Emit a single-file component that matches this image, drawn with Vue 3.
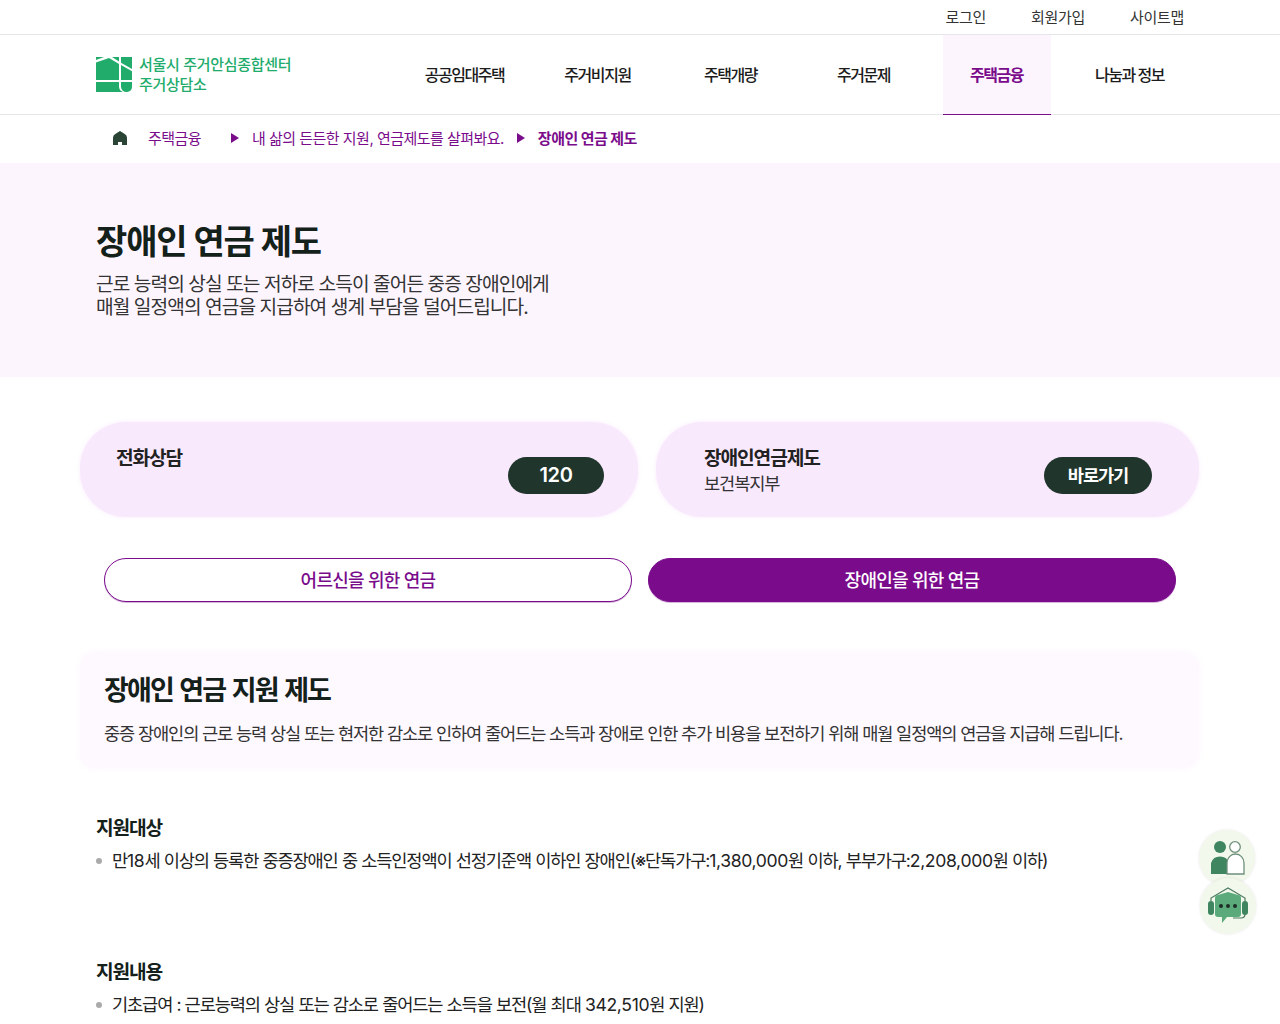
<script setup>
const topLinks = ['로그인', '회원가입', '사이트맵']
const navItems = [
  { label: '공공임대주택' },
  { label: '주거비지원' },
  { label: '주택개량' },
  { label: '주거문제' },
  { label: '주택금융', active: true },
  { label: '나눔과 정보' },
]
const sections = [
  { title: '지원대상', text: '만18세 이상의 등록한 중증장애인 중 소득인정액이 선정기준액 이하인 장애인(※단독가구:1,380,000원 이하, 부부가구:2,208,000원 이하)' },
  { title: '지원내용', text: '기초급여 : 근로능력의 상실 또는 감소로 줄어드는 소득을 보전(월 최대 342,510원 지원)' },
]
// numbers are set looser than the hangul around them
const splitNums = (text) => text.split(/([\d,]{2,})/)
</script>

<template>
  <div class="page">
    <div class="topbar">
      <a v-for="link in topLinks" :key="link" class="top_link">{{ link }}</a>
    </div>

    <header class="header">
      <div class="logo">
        <svg class="logo_mark" width="36" height="36" viewBox="0 0 36 36">
          <path d="M0 0 L8 0 L0 3 Z" fill="#22ac6c" />
          <path d="M0 5.5 L13 1 L23 7 L23 23 L0 23 Z" fill="#22ac6c" />
          <path d="M16 0 L23 0 L23 4.5 Z" fill="#22ac6c" />
          <path d="M25 0 L36 0 L36 12 L25 5.7 Z" fill="#22ac6c" />
          <path d="M25 8 L36 14.3 L36 23 L25 23 Z" fill="#22ac6c" />
          <path d="M0 25 L23 25 L23 30 A6 6 0 0 0 27 35 L0 35 Z" fill="#22ac6c" />
          <path d="M25 25 L36 25 L36 30 A5 5 0 0 1 31 35 L30.5 35 A5.5 5.5 0 0 1 25 29.5 Z" fill="#22ac6c" />
        </svg>
        <div class="logo_text">
          <span>서울시 주거안심종합센터</span>
          <span>주거상담소</span>
        </div>
      </div>
      <nav class="nav">
        <a
          v-for="item in navItems"
          :key="item.label"
          :class="{ nav_item: true, active: item.active }"
        >{{ item.label }}</a>
      </nav>
    </header>

    <div class="breadcrumb">
      <svg class="crumb_home" width="14" height="14" viewBox="0 0 14 14">
        <path d="M0 14 V6.5 Q0 4 3 2.5 L7 0 L11 2.5 Q14 4 14 6.5 V14 H9 V11 H5 V14 Z" fill="#2a4536" />
      </svg>
      <span class="crumb first">주택금융</span>
      <span class="arrow"></span>
      <span class="crumb">내 삶의 든든한 지원, 연금제도를 살펴봐요.</span>
      <span class="arrow"></span>
      <span class="crumb current">장애인 연금 제도</span>
    </div>

    <section class="hero">
      <h1>장애인 연금 제도</h1>
      <p>근로 능력의 상실 또는 저하로 소득이 줄어든 중증 장애인에게<br>매월 일정액의 연금을 지급하여 생계 부담을 덜어드립니다.</p>
    </section>

    <div class="cards">
      <div class="card card_left">
        <div class="card_text"><strong>전화상담</strong></div>
        <a class="pill pill_num">120</a>
      </div>
      <div class="card card_right">
        <div class="card_text">
          <strong>장애인연금제도</strong>
          <span>보건복지부</span>
        </div>
        <a class="pill pill_go">바로가기</a>
      </div>
    </div>

    <div class="tabs">
      <button class="tab">어르신을 위한 연금</button>
      <button class="tab on">장애인을 위한 연금</button>
    </div>

    <div class="info">
      <h2>장애인 연금 지원 제도</h2>
      <p>중증 장애인의 근로 능력 상실 또는 현저한 감소로 인하여 줄어드는 소득과 장애로 인한 추가 비용을 보전하기 위해 매월 일정액의 연금을 지급해 드립니다.</p>
    </div>

    <section v-for="s in sections" :key="s.title" class="detail">
      <h3>{{ s.title }}</h3>
      <div class="bullet">
        <i></i>
        <span>
          <template v-for="(part, idx) in splitNums(s.text)" :key="idx">
            <span v-if="idx % 2" class="num">{{ part }}</span>
            <template v-else>{{ part }}</template>
          </template>
        </span>
      </div>
    </section>

    <div class="floats">
      <a class="float_btn">
        <svg width="36" height="36" viewBox="0 0 36 36">
          <circle cx="11" cy="7" r="6" fill="#3f8560" />
          <path d="M2 34 L2 23 A9.5 9.5 0 0 1 20 23 L20 34 Z" fill="#3f8560" />
          <circle cx="26" cy="7" r="5.3" fill="#fff" stroke="#6f8f7c" stroke-width="1.3" />
          <path d="M18 34 L18 23 A8.5 9 0 0 1 35 23 L35 34 Z" fill="#fff" stroke="#6f8f7c" stroke-width="1.3" />
        </svg>
      </a>
      <a class="float_btn second">
        <svg width="44" height="40" viewBox="0 0 44 40">
          <path d="M5 15 L5 12 L22 2 L39 12 L39 28 Q39 32 35 32 L27 32" fill="none" stroke="#4d7a62" stroke-width="1.2" />
          <rect x="2" y="15" width="6" height="14" rx="3" fill="#3f8560" />
          <rect x="36" y="15" width="6" height="14" rx="3" fill="#3f8560" />
          <path d="M9 12 Q9 9 12 9 L22 6 L32 9 Q35 9 35 12 L35 28 Q35 31 32 31 L21 31 L16 37 L16 31 L12 31 Q9 31 9 28 Z" fill="#5aaa7c" />
          <circle cx="15" cy="20" r="2" fill="#1f2d26" />
          <circle cx="22" cy="20" r="2" fill="#1f2d26" />
          <circle cx="29" cy="20" r="2" fill="#1f2d26" />
        </svg>
      </a>
    </div>
  </div>
</template>

<style>
html, body {
  margin: 0;
  height: 1024px;
  overflow: hidden;
  background: #fff;
}
</style>

<style scoped>
.page {
  font-family: Inter, "Noto Sans CJK KR", sans-serif;
  color: #1c1c1c;
  letter-spacing: -0.07em;
  height: 1024px;
  overflow: hidden;
  position: relative;
}

.topbar {
  height: 34px;
  border-bottom: 1px solid #e6e6e8;
  display: flex;
  justify-content: flex-end;
  align-items: center;
  gap: 45px;
  padding-right: 96px;
}
.top_link {
  font-size: 15px;
  line-height: 34px;
  margin-top: 2px;
  color: #333;
  letter-spacing: -0.02em;
}

.header {
  height: 79px;
  border-bottom: 1px solid #e6e6e8;
  display: flex;
  align-items: center;
  padding-left: 96px;
}
.logo {
  display: flex;
  align-items: center;
  gap: 7px;
  width: 302px;
}
.logo_mark {
  display: block;
}
.logo_text {
  display: flex;
  flex-direction: column;
  color: #22ac6c;
  font-size: 15px;
  font-weight: 500;
  line-height: 20px;
  letter-spacing: -0.02em;
}
.nav {
  display: flex;
  height: 80px;
  align-self: flex-start;
}
.nav_item {
  width: 133px;
  font-size: 16px;
  font-weight: 500;
  letter-spacing: -0.09em;
  text-align: center;
  line-height: 81px;
  color: #1c1c1c;
  box-sizing: border-box;
}
.nav_item.active {
  width: 108px;
  margin: 0 12.5px;
  color: #7a0c8c;
  background: #fdf5fe;
  border-bottom: 1px solid #7a0c8c;
  font-weight: 700;
}

.breadcrumb {
  height: 48px;
  box-sizing: border-box;
  padding-bottom: 3px;
  display: flex;
  align-items: center;
  padding-left: 113px;
  font-size: 15px;
  letter-spacing: -0.035em;
  color: #7a0c8c;
}
.crumb_home {
  margin-right: 21px;
}
.crumb.first {
  margin-right: 30px;
}
.crumb.current {
  font-weight: 700;
}
.arrow {
  width: 0;
  height: 0;
  border-left: 8px solid #7a0c8c;
  border-top: 5px solid transparent;
  border-bottom: 5px solid transparent;
  margin-right: 13px;
  margin-top: 1px;
}
.crumb + .arrow + .crumb + .arrow {
  margin-left: 13px;
}

.hero {
  height: 214px;
  box-sizing: border-box;
  background: #fdf5fe;
  padding: 55px 96px 0;
}
.hero h1 {
  margin: 0;
  font-size: 34px;
  font-weight: 700;
  line-height: 48px;
  color: #14201a;
}
.hero p {
  margin: 7px 0 0;
  font-size: 19.2px;
  letter-spacing: -0.05em;
  line-height: 23px;
  color: #333;
}

.cards {
  display: flex;
  gap: 18px;
  padding: 45px 81px 0 80px;
}
.card {
  height: 95px;
  box-sizing: border-box;
  background: #f9e9fd;
  box-shadow: 0 0 4px rgba(249, 233, 253, 0.9);
  border-radius: 46px;
  display: flex;
  justify-content: space-between;
  align-items: flex-start;
  padding-top: 35px;
}
.card_left {
  width: 558px;
  padding-left: 36px;
  padding-right: 34px;
}
.card_right {
  flex: 1;
  padding-left: 48px;
  padding-right: 47px;
}
.card_text {
  display: flex;
  flex-direction: column;
  margin-top: -12px;
}
.card_text strong {
  font-size: 19.2px;
  font-weight: 700;
  line-height: 27px;
  color: #222;
}
.card_text span {
  font-size: 17.6px;
  line-height: 25px;
  margin-top: -1px;
  color: #333;
}
.pill {
  height: 37px;
  border-radius: 19px;
  background: #20352b;
  color: #fff;
  font-size: 17.6px;
  font-weight: 700;
  line-height: 37px;
  text-align: center;
}
.pill_num {
  width: 96px;
  font-size: 20px;
  font-weight: 600;
  letter-spacing: -0.02em;
}
.pill_go {
  width: 108px;
}

.tabs {
  display: flex;
  gap: 16px;
  padding: 41px 104px 0;
}
.tab {
  flex: 1;
  height: 44px;
  padding: 0 0 2px;
  border: 1px solid #7a0c8c;
  border-radius: 22px;
  background: #fff;
  box-shadow: 0 1px 0 rgba(122, 12, 140, 0.3);
  color: #7a0c8c;
  font: 500 18px Inter, "Noto Sans CJK KR", sans-serif;
  letter-spacing: -0.04em;
}
.tab.on {
  background: #7a0c8c;
  color: #fff;
}

.info {
  margin: 50px 81px 0 80px;
  height: 116px;
  box-sizing: border-box;
  background: #fef8ff;
  box-shadow: 0 0 6px rgba(254, 244, 255, 0.9);
  border-radius: 16px;
  padding: 20px 24px 0;
}
.info h2 {
  margin: 0;
  font-size: 27px;
  font-weight: 700;
  letter-spacing: -0.07em;
  word-spacing: 2px;
  line-height: 38px;
  color: #14201a;
}
.info p {
  margin: 11px 0 0;
  font-size: 17.6px;
  line-height: 26px;
  color: #333;
}

.detail {
  padding: 0 96px;
  margin-top: 45px;
  height: 99px;
}
.detail h3 {
  margin: 0;
  padding-top: 2px;
  font-size: 19.2px;
  font-weight: 700;
  line-height: 27px;
  color: #14201a;
}
.bullet {
  margin-top: 6px;
  font-size: 17.6px;
  letter-spacing: -0.065em;
  word-spacing: 0.45px;
  line-height: 26px;
  color: #222;
  display: flex;
  align-items: center;
}
.bullet i {
  width: 6px;
  height: 6px;
  border-radius: 50%;
  background: #aaa;
  margin-right: 10px;
  flex: none;
}
.num {
  letter-spacing: -0.02em;
}

.floats {
  position: fixed;
  left: 1199px;
  top: 830px;
  display: flex;
  flex-direction: column;
}
.float_btn {
  width: 56px;
  height: 56px;
  border-radius: 50%;
  background: #f3f8ec;
  box-shadow: 0 0 3px rgba(0, 0, 0, 0.1);
  display: flex;
  align-items: center;
  justify-content: center;
}
.float_btn.second {
  margin-top: -8px;
  margin-left: 1px;
}
</style>
